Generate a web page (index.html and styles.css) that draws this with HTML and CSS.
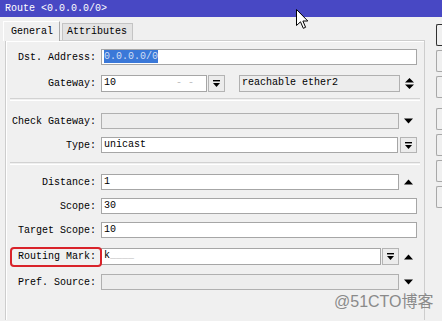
FILE: index.html
```html
<!DOCTYPE html>
<html>
<head>
<meta charset="utf-8">
<link rel="stylesheet" href="styles.css">
</head>
<body>
<div class="titlebar">Route &lt;0.0.0.0/0&gt;</div>
<div class="main">
  <div class="left">
    <div class="tabs">
      <div class="tab active">General</div>
      <div class="tab">Attributes</div>
    </div>
    <div class="panel">
      <div class="row r-dst">
        <span class="lbl">Dst. Address:</span>
        <div class="field w-full"><span class="sel">0.0.0.0/0</span></div>
      </div>
      <div class="row r-gw">
        <span class="lbl">Gateway:</span>
        <div class="field w-gw">10<span class="blur">- -</span></div>
        <div class="ddbtn"><svg width="9" height="9" viewBox="0 0 9 9"><rect x="1" y="1" width="7" height="1.4" fill="#000"/><path d="M1 4 H8 L4.5 8 Z" fill="#000"/></svg></div>
        <div class="field dis w-reach">reachable ether2</div>
        <div class="arr"><svg width="11" height="13" viewBox="0 0 11 13"><path d="M1 5.5 L5.5 1 L10 5.5 Z M1 7.5 H10 L5.5 12 Z" fill="#000"/></svg></div>
      </div>
      <div class="sep s1"></div>
      <div class="row r-cg">
        <span class="lbl">Check Gateway:</span>
        <div class="field dis w-arrow"></div>
        <div class="arr"><svg width="11" height="6" viewBox="0 0 11 6"><path d="M1 0.5 H10 L5.5 5.5 Z" fill="#000"/></svg></div>
      </div>
      <div class="row r-type">
        <span class="lbl">Type:</span>
        <div class="field w-type">unicast</div>
        <div class="ddbtn wide"><svg width="9" height="9" viewBox="0 0 9 9"><rect x="1" y="1" width="7" height="1.4" fill="#000"/><path d="M1 4 H8 L4.5 8 Z" fill="#000"/></svg></div>
      </div>
      <div class="sep s2"></div>
      <div class="row r-dist">
        <span class="lbl">Distance:</span>
        <div class="field w-arrow">1</div>
        <div class="arr"><svg width="11" height="6" viewBox="0 0 11 6"><path d="M1 5.5 L5.5 0.5 L10 5.5 Z" fill="#000"/></svg></div>
      </div>
      <div class="row r-scope">
        <span class="lbl">Scope:</span>
        <div class="field w-full">30</div>
      </div>
      <div class="row r-ts">
        <span class="lbl">Target Scope:</span>
        <div class="field w-full">10</div>
      </div>
      <div class="row r-rm">
        <span class="lbl marked">Routing Mark:</span>
        <div class="field w-rm">k<span class="blur">____</span></div>
        <div class="ddbtn"><svg width="9" height="9" viewBox="0 0 9 9"><rect x="1" y="1" width="7" height="1.4" fill="#000"/><path d="M1 4 H8 L4.5 8 Z" fill="#000"/></svg></div>
        <div class="arr"><svg width="11" height="6" viewBox="0 0 11 6"><path d="M1 5.5 L5.5 0.5 L10 5.5 Z" fill="#000"/></svg></div>
      </div>
      <div class="row r-ps">
        <span class="lbl">Pref. Source:</span>
        <div class="field dis w-arrow"></div>
        <div class="arr"><svg width="11" height="6" viewBox="0 0 11 6"><path d="M1 0.5 H10 L5.5 5.5 Z" fill="#000"/></svg></div>
      </div>
    </div>
  </div>
  <div class="buttons">
    <div class="btn default"></div>
    <div class="btn"></div>
    <div class="btn"></div>
    <div class="btn gap"></div>
    <div class="btn"></div>
    <div class="btn"></div>
    <div class="btn"></div>
  </div>
</div>
<div class="watermark">@51CTO博客</div>
<svg class="cursor" width="13" height="21" viewBox="0 0 13 21"><path d="M0.5 0.5 L0.5 16.5 L4.5 12.8 L7.3 19.3 L9.6 18.3 L6.9 12 L11.8 12 Z" fill="#fff" stroke="#000" stroke-width="1"/></svg>
</body>
</html>
```
FILE: styles.css
```css
html, body {
  margin: 0;
  padding: 0;
}
body {
  width: 442px;
  height: 321px;
  overflow: hidden;
  background: #f0f0f0;
  font-family: "Liberation Mono", "DejaVu Sans Mono", monospace;
  font-size: 10px;
  color: #000;
  position: relative;
}
.titlebar {
  height: 17px;
  line-height: 17px;
  background: #4848c4;
  color: #fff;
  padding-left: 5px;
}
.main {
  display: flex;
}
.left {
  width: 436px;
  flex: none;
}
.tabs {
  display: flex;
  align-items: flex-end;
  padding-left: 3px;
  margin-top: 5px;
  height: 18px;
  position: relative;
  z-index: 2;
}
.tab {
  height: 16px;
  line-height: 16px;
  padding: 0 5px 0 4px;
  background: #e3e3e3;
  border: 1px solid #c4c4c4;
  border-bottom: none;
  margin-left: 2px;
}
.tab.active {
  height: 19px;
  line-height: 20px;
  padding: 0 6px 0 7px;
  background: #f0f0f0;
  border-color: #fff #a8a8a8 #f0f0f0 #fff;
  margin-left: 0;
  margin-bottom: -1px;
}
.panel {
  margin-left: 5px;
  width: 418px;
  height: 271px;
  border: 1px solid #cdcdcd;
  border-bottom: none;
  box-shadow: inset 1px 1px 0 #fff;
  padding-top: 8px;
  display: flex;
  flex-direction: column;
}
.row {
  display: flex;
  align-items: center;
  height: 16px;
  margin-top: 8px;
}
.r-dst { margin-top: 0; }
.r-gw { margin-top: 10px; height: 17px; }
.r-cg { margin-top: 12px; }
.r-dist { margin-top: 9px; }
.r-rm { margin-top: 10px; height: 17px; }
.r-ps { margin-top: 9px; }
.lbl {
  width: 90px;
  margin-right: 5px;
  text-align: right;
  white-space: nowrap;
  position: relative;
  flex: none;
}
.lbl.marked::after {
  content: "";
  position: absolute;
  left: 4px;
  right: -6px;
  top: -4px;
  bottom: -5px;
  border: 2px solid #d9232a;
  border-radius: 4px;
}
.field {
  box-sizing: border-box;
  height: 100%;
  background: #fff;
  border: 1px solid #a6a6a6;
  padding-left: 2px;
  line-height: 14px;
  white-space: nowrap;
  overflow: hidden;
  flex: none;
}
.field.dis {
  background: #ededed;
  border-color: #b0b0b0;
}
.w-full { width: 316px; }
.w-arrow { width: 298px; }
.w-gw { width: 106px; }
.w-reach { width: 161px; margin-left: 14px; }
.w-type { width: 297px; }
.w-rm { width: 280px; }
.sel {
  background: #3a78d8;
  color: #d0def4;
  padding: 1px 0;
}
.blur {
  color: #c0c0c0;
  margin-left: 60px;
}
.r-rm .blur { margin-left: 0; }
.ddbtn {
  box-sizing: border-box;
  width: 17px;
  height: 100%;
  margin-left: 1px;
  background: #ececec;
  border: 1px solid #b4b4b4;
  display: flex;
  align-items: center;
  justify-content: center;
  flex: none;
}
.ddbtn.wide { margin-left: 2px; }
.arr {
  width: 18px;
  display: flex;
  align-items: center;
  justify-content: center;
  flex: none;
}
.sep {
  margin: 6px 4px 0 4px;
  height: 1px;
  border-top: 1px solid #d2d2d2;
  border-bottom: 1px solid #fff;
}
.s2 { margin-top: 9px; }
.buttons {
  display: flex;
  flex-direction: column;
  gap: 4px;
  padding-top: 7px;
}
.btn {
  box-sizing: border-box;
  width: 6px;
  height: 22px;
  background: #f0f0f0;
  border: 1px solid #a8a8a8;
  border-right: none;
  border-radius: 2px 0 0 2px;
}
.btn.default { border-color: #303030; }
.btn.gap { margin-top: 6px; }
.watermark {
  position: absolute;
  left: 334px;
  top: 293px;
  font-family: "Liberation Sans", "Noto Sans CJK SC", sans-serif;
  font-size: 16px;
  line-height: 18px;
  color: #8a8a8a;
}
.cursor {
  position: absolute;
  left: 296px;
  top: 9px;
}
```
